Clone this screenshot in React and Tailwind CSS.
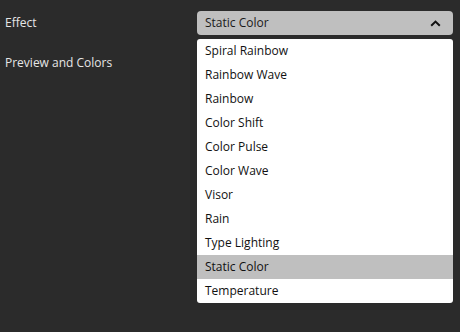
import { useState } from 'react';

const effects = [
  'Spiral Rainbow',
  'Rainbow Wave',
  'Rainbow',
  'Color Shift',
  'Color Pulse',
  'Color Wave',
  'Visor',
  'Rain',
  'Type Lighting',
  'Static Color',
  'Temperature',
];

const App = () => {
  const [selected, setSelected] = useState('Static Color');

  return (
    <div
      className="w-[460px] h-[332px] bg-[#2b2b2b] text-[12px] overflow-hidden"
      style={{ fontFamily: '"Open Sans", "Noto Sans", sans-serif' }}
    >
      <div className="flex pt-[11px]">
        <div className="w-[197px] pl-[5px]">
          <div className="h-6 flex items-center text-[#e6e6e6]">Effect</div>
          <div className="h-6 mt-4 flex items-center text-[#e6e6e6]">Preview and Colors</div>
        </div>

        <div className="w-[256px]">
          {/* select button */}
          <div className="h-6 rounded bg-[#bfbfbf] flex items-center justify-between pl-2 pr-3 text-[#1a1a1a]">
            <span>{selected}</span>
            <svg width="11" height="7" viewBox="0 0 11 7" fill="none">
              <path d="M1.2 5.8 L5.5 1.6 L9.8 5.8" stroke="#111" strokeWidth="2" />
            </svg>
          </div>

          {/* dropdown list */}
          <div className="mt-1 bg-white rounded-[3px] overflow-hidden">
            {effects.map((name) => (
              <div
                key={name}
                onClick={() => setSelected(name)}
                className={`h-6 flex items-center pl-2 text-[#111] ${name === selected ? 'bg-[#bfbfbf]' : ''}`}
              >
                {name}
              </div>
            ))}
          </div>
        </div>
      </div>
    </div>
  );
};

export default App;
